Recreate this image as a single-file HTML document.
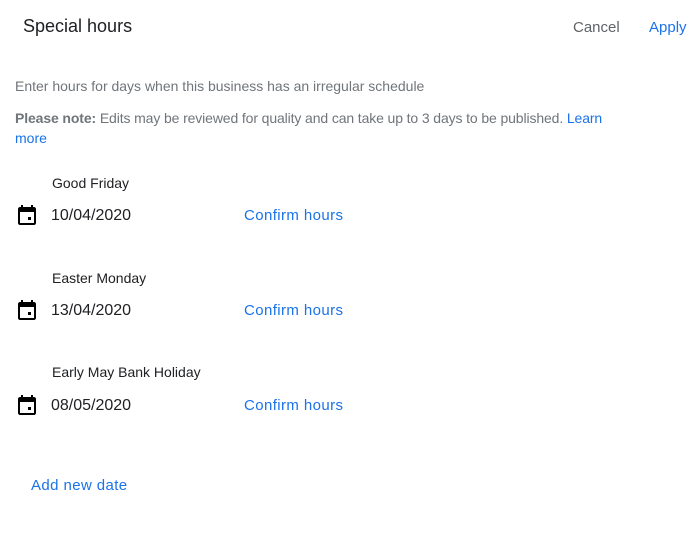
<!DOCTYPE html>
<html><head><style>
body{margin:0;width:700px;height:541px;background:#fff;font-family:"Liberation Sans",Arial,sans-serif;position:relative;overflow:hidden}
.a{position:absolute;white-space:nowrap;line-height:1}
.g{color:#70757a;font-size:14px}
.b{color:#1a73e8}
.n{font-size:14px;color:#202124}
.d{font-size:16px;color:#202124}
.c{font-size:15px;color:#1a73e8;letter-spacing:0.4px}
</style></head><body>
<div class="a" style="left:23px;top:17px;font-size:18px;color:#202124">Special hours</div>
<div class="a" style="left:573px;top:20px;font-size:15px;color:#5f6368">Cancel</div>
<div class="a b" style="left:649px;top:20px;font-size:15px">Apply</div>
<div class="a g" style="left:15px;top:79px">Enter hours for days when this business has an irregular schedule</div>
<div class="a g" style="left:15px;top:111px;letter-spacing:-0.12px"><b>Please note:</b> Edits may be reviewed for quality and can take up to 3 days to be published. <span class="b">Learn</span></div>
<div class="a g b" style="left:15px;top:131px;color:#1a73e8">more</div>

<div class="a n" style="left:52px;top:176px">Good Friday</div>
<svg class="a" style="left:15px;top:203px" width="24" height="24" viewBox="0 0 24 24"><path d="M19 4h-1V2h-2v2H8V2H6v2H5c-1.1 0-2 .9-2 2v14c0 1.1.9 2 2 2h14c1.1 0 2-.9 2-2V6c0-1.1-.9-2-2-2zm0 16H5V9h14v11zm-3-6h-3v3h3v-3z" fill="#000"/></svg>
<div class="a d" style="left:51px;top:208px">10/04/2020</div>
<div class="a c" style="left:244px;top:208px">Confirm hours</div>

<div class="a n" style="left:52px;top:271px">Easter Monday</div>
<svg class="a" style="left:15px;top:298px" width="24" height="24" viewBox="0 0 24 24"><path d="M19 4h-1V2h-2v2H8V2H6v2H5c-1.1 0-2 .9-2 2v14c0 1.1.9 2 2 2h14c1.1 0 2-.9 2-2V6c0-1.1-.9-2-2-2zm0 16H5V9h14v11zm-3-6h-3v3h3v-3z" fill="#000"/></svg>
<div class="a d" style="left:51px;top:303px">13/04/2020</div>
<div class="a c" style="left:244px;top:303px">Confirm hours</div>

<div class="a n" style="left:52px;top:365px">Early May Bank Holiday</div>
<svg class="a" style="left:15px;top:393px" width="24" height="24" viewBox="0 0 24 24"><path d="M19 4h-1V2h-2v2H8V2H6v2H5c-1.1 0-2 .9-2 2v14c0 1.1.9 2 2 2h14c1.1 0 2-.9 2-2V6c0-1.1-.9-2-2-2zm0 16H5V9h14v11zm-3-6h-3v3h3v-3z" fill="#000"/></svg>
<div class="a d" style="left:51px;top:398px">08/05/2020</div>
<div class="a c" style="left:244px;top:398px">Confirm hours</div>

<div class="a c" style="left:31px;top:478px">Add new date</div>
</body></html>
